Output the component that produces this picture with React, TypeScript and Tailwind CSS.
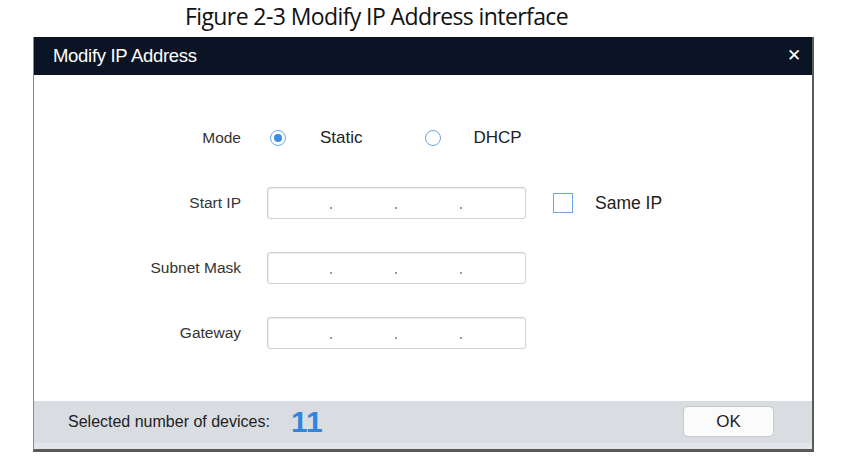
import React from "react";

function Radio(props: { checked?: boolean }) {
  return (
    <span className="flex h-[16px] w-[16px] items-center justify-center rounded-full border-[1.5px] border-[#6aa6e6] bg-white">
      {props.checked && <span className="h-[8px] w-[8px] rounded-full bg-[#3a8ee6]" />}
    </span>
  );
}

function IpInput() {
  return (
    <div className="relative h-[32px] w-[259px] rounded-[3px] border border-[#d0d0d0] bg-white shadow-[inset_1px_1px_1px_rgba(0,0,0,0.08)]">
      <span className="absolute left-[62px] top-[19px] h-[1.5px] w-[1.5px] bg-[#9a9a9a]" />
      <span className="absolute left-[127px] top-[19px] h-[1.5px] w-[1.5px] bg-[#9a9a9a]" />
      <span className="absolute left-[192px] top-[19px] h-[1.5px] w-[1.5px] bg-[#9a9a9a]" />
    </div>
  );
}

function Row(props: { label: string; children: React.ReactNode }) {
  return (
    <div className="flex h-[32px] items-center">
      <div className="w-[207px] text-right text-[15.5px] text-[#333]">{props.label}</div>
      <div className="ml-[26px] flex items-center">{props.children}</div>
    </div>
  );
}

export default function App() {
  return (
    <div className="h-[458px] w-[856px] bg-white" style={{ fontFamily: '"Liberation Sans", Arial, sans-serif' }}>
      <div
        className="flex h-[37px] items-start pl-[185px] pt-[2px] text-[23px] leading-[28px] text-[#111]"
        style={{ fontFamily: '"Open Sans", sans-serif', letterSpacing: "-0.6px" }}
      >
        Figure 2-3 Modify IP Address interface
      </div>

      <div className="ml-[33px] w-[781px] border-b-[3px] border-l border-r-[2px] border-[#5a5a5a] border-l-[#8a8a8a]">
        <div className="flex h-[38px] items-center justify-between bg-[#0b1424] pl-[19px] pr-[11px] text-white">
          <span className="text-[18.5px] tracking-[-0.3px]">Modify IP Address</span>
          <span className="text-[17px]">✕</span>
        </div>

        <div className="flex h-[326px] flex-col gap-[33px] bg-white pt-[47px]">
          <Row label="Mode">
            <span className="ml-[3px]"><Radio checked /></span>
            <span className="ml-[34px] text-[17px] text-[#222]">Static</span>
            <span className="ml-[62px]"><Radio /></span>
            <span className="ml-[33px] text-[17px] text-[#222]">DHCP</span>
          </Row>
          <Row label="Start IP">
            <IpInput />
            <span className="ml-[27px] h-[20px] w-[20px] border-[1.5px] border-[#6aa6e6] bg-white" />
            <span className="ml-[22px] text-[17.5px] text-[#222]">Same IP</span>
          </Row>
          <Row label="Subnet Mask">
            <IpInput />
          </Row>
          <Row label="Gateway">
            <IpInput />
          </Row>
        </div>

        <div className="flex h-[48px] items-start bg-[#d9dde2] pl-[34px] pr-[38px] pt-[5px] shadow-[inset_0_-6px_0_#e2e5e9]">
          <div className="flex h-[31px] flex-1 items-center">
            <span className="text-[16px] text-[#222]">Selected number of devices:</span>
            <span className="ml-[21px] text-[30px] font-bold leading-none text-[#2f86dc]">11</span>
          </div>
          <button className="h-[31px] w-[91px] rounded-[5px] border border-[#c8c8c8] bg-[#fbfbfb] text-[17px] text-[#222]">
            OK
          </button>
        </div>
      </div>
    </div>
  );
}
